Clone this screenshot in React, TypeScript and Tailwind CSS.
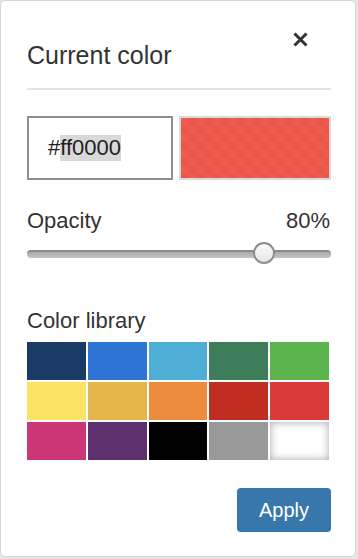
import { useState } from "react";

const SWATCHES = [
  "#1b3b67",
  "#2d74d4",
  "#4eaed5",
  "#3e7d5a",
  "#5cb44f",
  "#fbe265",
  "#e3b54b",
  "#ef8b3c",
  "#c02e22",
  "#da3b38",
  "#cc3677",
  "#5e306e",
  "#000000",
  "#999999",
  "#ffffff",
];

function CloseIcon() {
  return (
    <svg width="15" height="15" viewBox="0 0 15 15" aria-hidden className="mr-[23px] shrink-0 text-[#333]">
      <path d="M1.5 1.5l12 12M13.5 1.5l-12 12" stroke="currentColor" strokeWidth="3" strokeLinecap="butt" />
    </svg>
  );
}

function OpacitySlider({ value }: { value: number }) {
  // thumb is 22px, track is 304px wide
  const left = ((304 - 22) * value) / 100;
  return (
    <div className="relative mt-[10px] h-[22px] w-full">
      <div className="absolute left-0 right-0 top-[8px] h-[8px] rounded-full border-t-2 border-[#8a8a8a] bg-gradient-to-b from-[#a9a9a9] to-[#c4c4c4]" />
      <div
        className="absolute top-0 h-[22px] w-[22px] rounded-full border-2 border-[#8c8c8c] bg-gradient-to-b from-[#fafafa] to-[#e6e6e6]"
        style={{ left }}
      />
    </div>
  );
}

export default function App() {
  const [opacity] = useState(80);

  return (
    <div className="h-[559px] w-[358px] bg-[#e6e6e6] font-['Liberation_Sans',Arial,sans-serif] text-[#333]">
      <div className="flex h-[557px] w-[356px] flex-col rounded-[5px] border border-[#d6d6d6] bg-white pl-[26px] pr-[24px] pt-[31px]">
        <div className="flex items-start justify-between">
          <h2 className="mt-[11px] text-[25px] leading-[25px]">Current color</h2>
          <CloseIcon />
        </div>
        <div className="mt-[20px] h-[2px] w-full bg-[#e3e3e3]" />

        <div className="mt-[26px] flex h-[64px] gap-[6px]">
          <div className="flex w-[146px] items-center border-2 border-[#8e8e8e] pl-[19px] text-[22px] leading-[26px] text-[#222]">
            #<span className="bg-[#d9d9d9]">ff0000</span>
          </div>
          <div className="flex-1 border-2 border-[#dadada] bg-[conic-gradient(#e9564a_25%,#ef5c51_0_50%,#e9564a_0_75%,#ef5c51_0)] bg-[length:16px_16px]" />
        </div>

        <div className="mt-[30px] flex items-center justify-between text-[22px] leading-[22px]">
          <span>Opacity</span>
          <span className="mr-[1px]">{opacity}%</span>
        </div>
        <OpacitySlider value={opacity} />

        <div className="mt-[46px] text-[22px] leading-[22px]">Color library</div>
        <div className="mt-[10px] grid w-[302px] grid-cols-5 gap-[2px]">
          {SWATCHES.map((c, i) => (
            <div
              key={i}
              className={
                c === "#ffffff"
                  ? "h-[38px] bg-white shadow-[inset_0_0_8px_rgba(0,0,0,0.35)]"
                  : "h-[38px]"
              }
              style={{ backgroundColor: c }}
            />
          ))}
        </div>

        <div className="mt-[28px] flex justify-end">
          <button
            type="button"
            className="h-[44px] w-[94px] rounded-[4px] bg-[#3777ab] text-[20px] text-white"
          >
            Apply
          </button>
        </div>
      </div>
    </div>
  );
}
